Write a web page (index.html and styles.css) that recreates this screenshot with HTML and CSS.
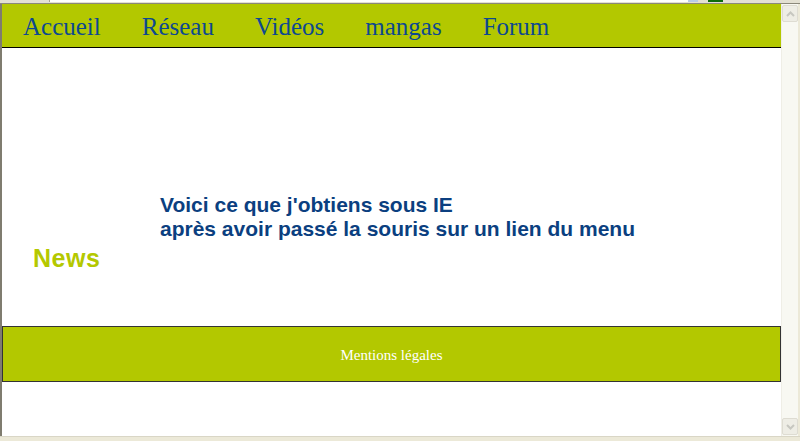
FILE: index.html
```html
<!DOCTYPE html>
<html lang="fr">
<head>
<meta charset="utf-8">
<title>News</title>
<link rel="stylesheet" href="styles.css">
</head>
<body>
<div class="window">
  <div class="chrome-top">
    <span class="chrome-field"></span>
    <span class="chrome-btn"></span>
  </div>
  <div class="frame">
    <div class="viewport">
      <nav class="menu">
        <a href="#">Accueil</a>
        <a href="#">Réseau</a>
        <a href="#">Vidéos</a>
        <a href="#">mangas</a>
        <a href="#">Forum</a>
      </nav>
      <main class="content">
        <p class="note">Voici ce que j'obtiens sous IE<br>après avoir passé la souris sur un lien du menu</p>
        <h1 class="news">News</h1>
      </main>
      <footer class="footer">Mentions légales</footer>
    </div>
    <div class="scrollbar">
      <span class="sb-btn sb-up"><svg width="9" height="6" viewBox="0 0 9 6"><path d="M1 5 L4.5 1.5 L8 5" fill="none" stroke="#c7c7c0" stroke-width="2"/></svg></span>
      <span class="sb-btn sb-down"><svg width="9" height="6" viewBox="0 0 9 6"><path d="M1 1 L4.5 4.5 L8 1" fill="none" stroke="#c7c7c0" stroke-width="2"/></svg></span>
    </div>
  </div>
  <div class="chrome-bottom"></div>
</div>
</body>
</html>
```
FILE: styles.css
```css
html, body {
  margin: 0;
  padding: 0;
  width: 800px;
  height: 441px;
  overflow: hidden;
  background: #ece9d8;
}

.window {
  display: flex;
  flex-direction: column;
  width: 800px;
  height: 441px;
}

.chrome-top {
  height: 3px;
  background: #e3e0d2;
  border-bottom: 1px solid #8b887a;
  display: flex;
  flex: none;
}

.chrome-field {
  margin-left: 49px;
  width: 638px;
  height: 2px;
  background: #fff;
  border-right: 10px solid #b9cbe8;
  border-left: 1px solid #a6a294;
}

.chrome-btn {
  margin-left: 10px;
  width: 15px;
  height: 2px;
  background: #0b6b0b;
}

.frame {
  flex: 1;
  display: flex;
  border-left: 2px solid #7f7c6f;
  min-height: 0;
}

.viewport {
  width: 779px;
  background: #fff;
  display: flex;
  flex-direction: column;
}

.menu {
  height: 43px;
  background: #b3c800;
  border-bottom: 1px solid #000;
  display: flex;
  align-items: center;
  gap: 41px;
  padding-left: 21px;
  flex: none;
}

.menu a {
  font-family: "Liberation Serif", "Times New Roman", serif;
  font-size: 25px;
  color: #0d4890;
  text-decoration: none;
  line-height: 1;
  padding-top: 1px;
}

.content {
  height: 278px;
  flex: none;
  font-family: "Liberation Sans", Arial, sans-serif;
}

.note {
  margin: 145px 0 0 158px;
  font-size: 21px;
  font-weight: bold;
  line-height: 24px;
  color: #0b3f80;
}

.news {
  margin: 3px 0 0 31px;
  font-size: 25px;
  font-weight: bold;
  line-height: 28px;
  color: #b4c800;
  letter-spacing: 0.5px;
}

.footer {
  background: #b3c800;
  border: 1px solid #333;
  flex: none;
  display: flex;
  align-items: center;
  justify-content: center;
  font-family: "Liberation Serif", "Times New Roman", serif;
  font-size: 15px;
  color: #fff;
  padding-top: 2px;
  box-sizing: border-box;
  height: 56px;
}

.scrollbar {
  width: 16px;
  background: #f8f8f2;
  border-left: 1px solid #efeee6;
  border-right: 2px solid #ece9d8;
  display: flex;
  flex-direction: column;
  justify-content: space-between;
  align-items: center;
  padding: 1px 0 1px;
}

.sb-btn {
  width: 14px;
  height: 15px;
  background: #eeede5;
  border: 1px solid #dedcd2;
  border-radius: 2px;
  display: flex;
  align-items: center;
  justify-content: center;
}

.chrome-bottom {
  height: 5px;
  flex: none;
  background: #ece9d8;
  border-top: 1px solid #d9d6c6;
  box-sizing: border-box;
}
```
